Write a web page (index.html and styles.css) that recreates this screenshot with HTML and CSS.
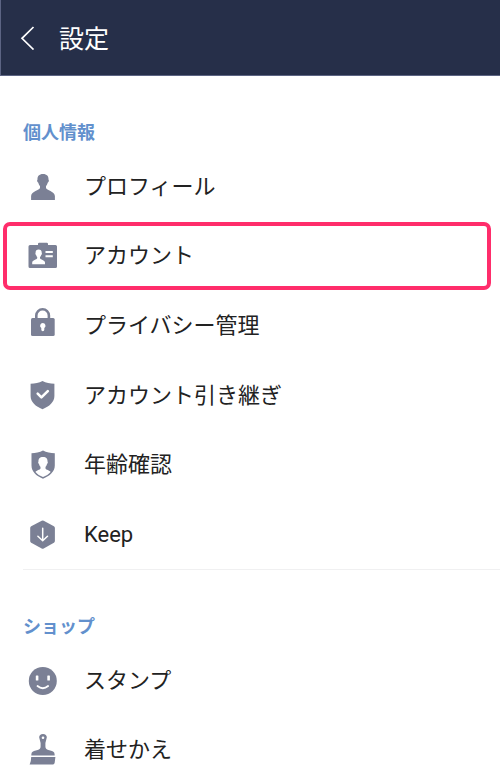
FILE: index.html
```html
<!DOCTYPE html>
<html lang="ja">
<head>
<meta charset="utf-8">
<meta name="viewport" content="width=device-width, initial-scale=1">
<title>設定</title>
<link rel="stylesheet" href="styles.css">
</head>
<body>
<header class="bar">
  <button class="back" type="button" aria-label="戻る">
    <svg width="16" height="24" viewBox="0 0 16 24" fill="none" stroke="#fff" stroke-width="1.7"><path d="M13.500 1 2 12.300 13.500 23.500"/></svg>
  </button>
  <h1 class="title">設定</h1>
</header>
<main class="content">
  <section class="group">
    <h2 class="heading">個人情報</h2>
    <ul class="list list-personal">
      <li class="item"><a class="row" href="#profile">
        <svg class="icon" viewBox="0 -2 32 36"><path d="M16 4c-3.900 0-5.700 2.300-5.500 5.400-.8.600-.3 2.700.8 3.300.4 1.700 1 2.500 1.700 3.300v2c-.5 2.300-8.500 3-8.900 8v4h23.800v-4c-.4-5-8.400-5.700-8.900-8v-2c.7-.8 1.300-1.600 1.700-3.300 1.100-.6 1.600-2.700.8-3.300C21.700 6.300 19.900 4 16 4z"/></svg>
        <span class="label">プロフィール</span></a></li>
      <li class="item highlighted"><a class="row" href="#account">
        <svg class="icon" viewBox="0 -2 32 36"><path d="M11 6V5q0-1.200 1.200-1.200h7.600Q21 3.800 21 5v1h7.500Q30 6 30 7.500v20q0 1.500-1.500 1.500H3q-1.500 0-1.500-1.500v-20Q1.500 6 3 6z"/><path class="cut" d="M11.700 10.500c-2.200 0-3.300 1.500-3.100 3.500-.5.500-.1 1.700.5 2 .3 1.100.7 1.500 1.100 2v1.300c-.5 1.400-4.700 1.700-5 4.200V25.200h12.800v-1.700c-.3-2.500-4.500-2.800-5-4.200V18c.5-.5.900-.9 1.200-2 .6-.3 1-1.500.5-2 .2-2-.9-3.500-3-3.500zM18.500 12h7.300v2h-7.300zM18.500 16.200h7.300v2h-7.300z"/></svg>
        <span class="label">アカウント</span></a></li>
      <li class="item"><a class="row" href="#privacy">
        <svg class="icon" viewBox="0 -2 32 36"><path class="line" d="M9.300 10V6.500a6.300 6.300 0 0 1 12.600 0V10" stroke-width="2.600"/><rect x="4" y="9" width="23.700" height="18" rx="1.500"/><path class="cut" d="M15.800 14a2.800 2.800 0 0 0-1.500 5.100V20.700a1.500 1.500 0 0 0 3 0V19.100A2.800 2.800 0 0 0 15.800 14z"/></svg>
        <span class="label">プライバシー管理</span></a></li>
      <li class="item"><a class="row" href="#transfer">
        <svg class="icon" viewBox="0 -2 32 36"><path d="M15.500 2C12 3.800 8 4.600 3.600 4.700V17c0 6 5 10.500 11.900 13.200C22.400 27.500 27.400 23 27.400 17V4.700C23 4.600 19 3.800 15.500 2z"/><path class="line cut-line" d="m10.700 14.700 3.700 3.700 6.400-6.300" stroke-width="2.600"/></svg>
        <span class="label">アカウント引き継ぎ</span></a></li>
      <li class="item"><a class="row" href="#age">
        <svg class="icon" viewBox="0 -2 32 36"><path d="M16 2.500C12.500 4.300 8.500 5.100 4.500 5.200V17.500c0 6 4.600 10.500 11.500 13.200C22.900 28 27.800 23.500 27.800 17.500V5.200C23.500 5.100 19.500 4.300 16 2.500z"/><path class="cut" d="M16 9c-3.400 0-4.700 2-4.500 4.600-.7.500-.2 2.200.6 2.600.3 1.400.8 2 1.400 2.600v1.700c-.5 1.400-4 1.800-5 3.400 1.700 2.200 4.500 3.900 7.500 5.100 3-1.200 5.800-2.900 7.600-5.100-1-1.600-4.600-2-5.100-3.400v-1.700c.6-.6 1.100-1.200 1.400-2.600.8-.4 1.300-2.100.6-2.600C20.700 11 19.400 9 16 9z"/></svg>
        <span class="label">年齢確認</span></a></li>
      <li class="item"><a class="row" href="#keep">
        <svg class="icon" viewBox="0 -2 32 36"><path d="M14.700 2.700q1-.5 2 0l10.200 5.600q1 .6 1 1.700v13q0 1.100-1 1.700l-10.200 5.700q-1 .5-2 0L4.200 24.700q-1-.6-1-1.700V10q0-1.100 1-1.700z"/><path class="line cut-line" d="M15.700 10.300V22.500M10.900 18.300l4.800 4.500 4.800-4.500" stroke-width="1.500"/></svg>
        <span class="label">Keep</span></a></li>
    </ul>
  </section>
  <section class="group">
    <h2 class="heading">ショップ</h2>
    <ul class="list list-shop">
      <li class="item"><a class="row" href="#stickers">
        <svg class="icon" viewBox="0 -2 32 36"><circle cx="15.800" cy="17" r="14"/><rect class="cut" x="8.800" y="11.500" width="2.600" height="5" rx=".6"/><rect class="cut" x="20.300" y="11.500" width="2.600" height="5" rx=".6"/><path class="line cut-line" d="M10.500 22q5.300 4.500 10.600 0" stroke-width="1.800"/></svg>
        <span class="label">スタンプ</span></a></li>
      <li class="item"><a class="row" href="#themes">
        <svg class="icon" viewBox="0 -2 32 36"><path d="M16 1c-2.600 0-4 1.500-3.800 3.600L13.600 10v3.500c0 2-1 2.800-3 3.400l-3.600 1c-2.200.7-2.700 2-2.700 4.600h23.400c0-2.600-.5-3.900-2.700-4.600l-3.600-1c-2-.6-3-1.400-3-3.400V10l1.400-5.400C20 2.500 18.600 1 16 1zM4.200 24h24.200l-.7 5.500q-.3 2-1.700 2H2.600Q4.200 28 4.200 24z"/><circle class="cut" cx="16" cy="4.800" r="1.300"/></svg>
        <span class="label">着せかえ</span></a></li>
    </ul>
  </section>
</main>
</body>
</html>
```
FILE: styles.css
```css
* {
  box-sizing: border-box;
}

body {
  margin: 0;
  height: 100vh;
  display: flex;
  flex-direction: column;
  background: #fff;
  color: #222;
  font-family: Roboto, "Noto Sans CJK JP", sans-serif;
}

.bar {
  flex: none;
  display: flex;
  align-items: center;
  gap: 20px;
  height: 76px;
  padding: 0 19px;
  background: #262f49;
  border-bottom: 1px solid #5c6483;
  border-left: 1px solid #5c6483;
  color: #fff;
}

.back {
  display: flex;
  padding: 0;
  border: 0;
  background: none;
  cursor: pointer;
}

.title {
  margin: 0;
  padding: 5px 0 0 3px;
  font-size: 25px;
  font-weight: 400;
  line-height: 32px;
}

.content {
  flex: 1;
  min-height: 0;
  overflow-y: auto;
  scrollbar-width: none;
}

.group {
  padding-top: 44px;
}

.heading {
  margin: 0 0 5px;
  padding-left: 23px;
  color: #6290cd;
  font-size: 18px;
  font-weight: 700;
  line-height: 26px;
}

.list {
  display: grid;
  grid-auto-rows: 1fr;
  margin: 0;
  padding: 0;
  list-style: none;
}

.list-personal {
  height: 419px;
  margin-left: 23px;
  border-bottom: 1px solid #f0f0f1;
}

.list-shop {
  height: 139px;
  margin-left: 23px;
}

.item {
  position: relative;
  display: grid;
}

.row {
  display: flex;
  align-items: center;
  gap: 25px;
  padding-left: 4px;
  color: inherit;
  font-size: 22px;
  line-height: 32px;
  text-decoration: none;
}

.label {
  padding-top: 2px;
}

.highlighted::after {
  content: "";
  position: absolute;
  inset: 1px 9px 0 -20px;
  border: 4px solid #ff2d6b;
  border-radius: 7px;
  pointer-events: none;
}

.icon {
  flex: none;
  width: 32px;
  height: 36px;
  fill: #7b8095;
}

.icon .cut {
  fill: #fff;
}

.icon .line {
  fill: none;
  stroke: #7b8095;
}

.icon .cut-line {
  stroke: #fff;
  stroke-linecap: round;
  stroke-linejoin: round;
}
```
